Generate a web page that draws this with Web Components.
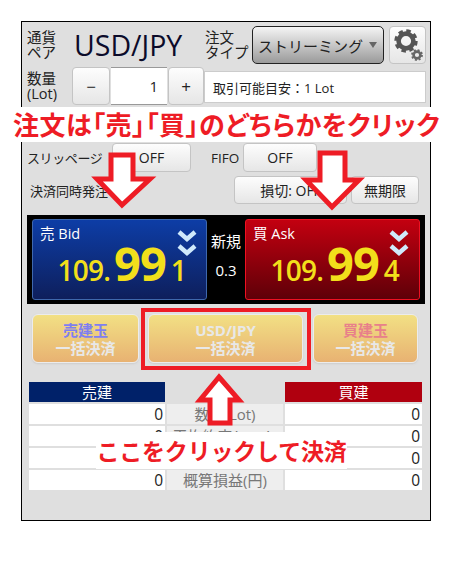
<!DOCTYPE html>
<html lang="ja">
<head>
<meta charset="utf-8">
<title>USD/JPY</title>
<style>
  html, body { margin: 0; background: #fff; }
  body { font-family: "Open Sans", "Noto Sans CJK JP", sans-serif; width: 474px; height: 562px; overflow: hidden; position: relative; }
</style>
</head>
<body>
<trade-panel></trade-panel>
<call-outs></call-outs>

<script>
const FONT = `"Open Sans", "Noto Sans CJK JP", sans-serif`;

class FxButton extends HTMLElement {
    constructor() {
        super();
        this.attachShadow({ mode: 'open' }).innerHTML = `
            <style>
                :host {
                    display: flex;
                    align-items: center;
                    justify-content: center;
                    box-sizing: border-box;
                    border: 1px solid #c4c4c4;
                    border-radius: 4px;
                    background: linear-gradient(#fdfdfd, #e6e6e6);
                    color: #222;
                    font-size: 14px;
                }
            </style>
            <slot></slot>
        `;
    }
}

class QuoteCard extends HTMLElement {
    constructor() {
        super();
        const sell = this.getAttribute('side') === 'sell';
        this.attachShadow({ mode: 'open' }).innerHTML = `
            <style>
                :host {
                    display: block;
                    position: relative;
                    box-sizing: border-box;
                    height: 81px;
                    border-radius: 3px;
                    border: 1px solid ${sell ? '#3f68ad' : '#ee1122'};
                    background: ${sell ? 'linear-gradient(#0d3da6, #0e1f5c)' : 'linear-gradient(#c30010, #5e0008)'};
                    color: #fff;
                }
                .name { position: absolute; left: 7px; top: 4px; font-size: 14.5px; line-height: 20px; }
                .price {
                    position: absolute;
                    right: 20px;
                    bottom: 1px;
                    display: flex;
                    align-items: baseline;
                    color: #f2df1b;
                    font-weight: 600;
                    font-size: 28px;
                    line-height: 56px;
                    letter-spacing: -0.8px;
                }
                .big { font-size: 47px; font-weight: 700; letter-spacing: -1px; margin: 0 5px 0 4px; }
                svg { position: absolute; right: ${sell ? '9px' : '10px'}; top: 10px; }
            </style>
            <div class="name"><slot name="name"></slot></div>
            <svg width="20" height="28" viewBox="0 0 20 28" fill="none" stroke="#cfe9fb" stroke-width="4.4">
                <polyline points="2,2 10,9 18,2"/>
                <polyline points="2,16 10,23 18,16"/>
            </svg>
            <div class="price"><span>${this.getAttribute('head')}</span><span class="big">${this.getAttribute('big')}</span><span>${this.getAttribute('tail')}</span></div>
        `;
    }
}

class CloseButton extends HTMLElement {
    constructor() {
        super();
        this.attachShadow({ mode: 'open' }).innerHTML = `
            <style>
                :host {
                    display: flex;
                    flex-direction: column;
                    align-items: center;
                    justify-content: center;
                    box-sizing: border-box;
                    height: 49px;
                    border-radius: 6px;
                    border: 1px solid #ececec;
                    background: linear-gradient(#f2e084, #e8b272);
                    box-shadow: 0 1px 2px #ccc;
                    color: #e8e8e8;
                    font-size: 15px;
                    font-weight: 700;
                    line-height: 18px;
                }
                .top { color: var(--top-color, #e8e8e8); }
            </style>
            <div class="top"><slot name="top"></slot></div>
            <div>一括決済</div>
        `;
    }
}

class PositionTable extends HTMLElement {
    constructor() {
        super();
        const labels = ['数量(Lot)', '平均約定レート', '評価損益(pips)', '概算損益(円)'];
        const rows = labels.map(l => `
            <div class="val">0</div><div class="mid">${l}</div><div class="val">0</div>
        `).join('');
        this.attachShadow({ mode: 'open' }).innerHTML = `
            <style>
                :host {
                    display: grid;
                    grid-template-columns: 136px 116px 137px;
                    grid-auto-rows: 20px;
                    column-gap: 2px;
                    row-gap: 2px;
                    font-size: 15px;
                }
                div { display: flex; align-items: center; line-height: 20px; }
                .head { justify-content: center; color: #fff; font-size: 15px; }
                .sell { background: #002169; }
                .buy { background: #b0000f; }
                .val { justify-content: flex-end; background: #fff; color: #222; padding-right: 2px; font-size: 15.5px; }
                .mid { justify-content: center; background: #eeeeee; color: #777; }
            </style>
            <div class="head sell">売建</div><div></div><div class="head buy">買建</div>
            ${rows}
        `;
    }
}

class TradePanel extends HTMLElement {
    constructor() {
        super();
        this.attachShadow({ mode: 'open' }).innerHTML = `
            <style>
                :host {
                    display: block;
                    box-sizing: border-box;
                    position: absolute;
                    left: 21px;
                    top: 21px;
                    width: 410px;
                    height: 500px;
                    border: 1px solid #000;
                    background: #dfdfdf;
                    padding: 4px 4px 0 5px;
                    font-family: ${FONT};
                    font-size: 14px;
                    color: #222;
                }
                .row { display: flex; align-items: stretch; }
                .lbl { font-size: 14.5px; line-height: 15px; display: flex; align-items: center; }
                .r1 { height: 38px; }
                .pair { width: 131px; font-size: 28.5px; color: #0b0b2a; display: flex; align-items: center; white-space: nowrap; }
                .select {
                    width: 132px;
                    border: 1px solid #222;
                    border-radius: 5px;
                    background: linear-gradient(#f4f4f4, #9a9a9a);
                    display: flex;
                    align-items: center;
                    box-sizing: border-box;
                    padding-left: 5px;
                    font-size: 15px;
                    white-space: nowrap;
                }
                .caret { width: 0; height: 0; border: 4px solid transparent; border-top: 6px solid #666; border-bottom: 0; margin-left: 6px; }
                fx-button.gear { width: 37px; margin-left: 5px; }
                .r2 { height: 38px; margin-top: 3px; }
                .num {
                    width: 56px;
                    box-sizing: border-box;
                    background: #fff;
                    border-top: 1px solid #999;
                    border-bottom: 1px solid #999;
                    text-align: right;
                    padding-right: 9px;
                    line-height: 36px;
                    margin: 0 1px 0 1px;
                    font-size: 15px;
                }
                .info {
                    flex: 1;
                    box-sizing: border-box;
                    margin: 4px 0 2px 0;
                    background: #fff;
                    border: 1px solid #ccc;
                    display: flex;
                    align-items: center;
                    padding-left: 8px;
                    font-size: 13px;
                }
                .step { font-size: 17px; }
                .r3 { height: 29px; margin-top: 38px; }
                .r4 { height: 28px; margin-top: 4px; }
                .plain { display: flex; align-items: center; font-size: 13.5px; white-space: nowrap; }
                .quotes {
                    display: grid;
                    grid-template-columns: 175px 1fr 175px;
                    box-sizing: border-box;
                    width: 398px;
                    height: 89px;
                    margin-top: 11px;
                    padding: 4px 5px;
                    background: #000;
                }
                .spread { display: flex; flex-direction: column; align-items: center; color: #fff; font-size: 15px; padding-top: 12px; gap: 9px; line-height: 20px; }
                .closers { display: flex; margin: 10px 0 0 5px; }
                position-table { margin: 19px 0 0 2px; }
            </style>
            <div class="row r1">
                <div class="lbl" style="width:47px">通貨<br>ペア</div>
                <div class="pair">USD/JPY</div>
                <div class="lbl" style="width:47px">注文<br>タイプ</div>
                <div class="select">ストリーミング<span class="caret"></span></div>
                <fx-button class="gear">
                    <svg width="32" height="34" viewBox="0 0 32 34" fill="none" stroke="#555">
                        <circle cx="14" cy="13" r="7.4" stroke-width="4.6"/>
                        <circle cx="14" cy="13" r="10" stroke-width="3.4" stroke-dasharray="4.4 3.45"/>
                        <circle cx="25" cy="27" r="3.4" stroke-width="2.6" stroke="#666"/>
                        <circle cx="25" cy="27" r="5" stroke-width="1.8" stroke-dasharray="2 1.93" stroke="#666"/>
                    </svg>
                </fx-button>
            </div>
            <div class="row r2">
                <div class="lbl" style="width:45px">数量<br>(Lot)</div>
                <fx-button class="step" style="width:38px">−</fx-button>
                <div class="num">1</div>
                <fx-button class="step" style="width:36px">+</fx-button>
                <div class="info">取引可能目安：1 Lot</div>
            </div>
            <div class="row r3">
                <div class="plain" style="width:85px;font-size:13px;letter-spacing:-0.4px">スリッページ</div>
                <fx-button style="width:79px">OFF</fx-button>
                <div class="plain" style="width:32px;margin-left:20px">FIFO</div>
                <fx-button style="width:74px">OFF</fx-button>
            </div>
            <div class="row r4">
                <div class="plain" style="width:207px;padding-left:3px;box-sizing:border-box;font-size:13px">決済同時発注</div>
                <fx-button style="width:113px">損切: OFF</fx-button>
                <fx-button style="width:68px;margin-left:4px">無期限</fx-button>
            </div>
            <div class="quotes">
                <quote-card side="sell" head="109." big="99" tail="1"><span slot="name">売 Bid</span></quote-card>
                <div class="spread"><span>新規</span><span>0.3</span></div>
                <quote-card side="buy" head="109." big="99" tail="4"><span slot="name">買 Ask</span></quote-card>
            </div>
            <div class="closers">
                <close-button style="width:107px;--top-color:#7f7ff0"><span slot="top">売建玉</span></close-button>
                <close-button style="width:155px;margin-left:9px"><span slot="top">USD/JPY</span></close-button>
                <close-button style="width:105px;margin-left:10px;--top-color:#e8808a"><span slot="top">買建玉</span></close-button>
            </div>
            <position-table></position-table>
        `;
    }
}

// annotations drawn on top of the screenshot
class CallOuts extends HTMLElement {
    constructor() {
        super();
        this.attachShadow({ mode: 'open' }).innerHTML = `
            <style>
                :host { display: block; position: absolute; left: 0; top: 0; width: 474px; height: 562px; font-family: ${FONT}; }
                .band {
                    position: absolute;
                    background: #fff;
                    color: #ee1c25;
                    font-family: "Noto Sans CJK JP", sans-serif;
                    font-weight: 700;
                    white-space: nowrap;
                    text-align: center;
                }
                .one { left: 0; top: 107px; width: 474px; height: 35px; font-size: 26px; line-height: 34px; padding-right: 21px; box-sizing: border-box; font-feature-settings: "palt"; letter-spacing: 0.5px; }
                .two { left: 96px; top: 432px; width: 251px; height: 37px; font-size: 23px; line-height: 37px; letter-spacing: -0.2px; }
                .box { position: absolute; left: 141px; top: 308px; width: 170px; height: 62px; box-sizing: border-box; border: 4px solid #ee1c25; }
                svg { position: absolute; left: 0; top: 0; }
            </style>
            <div class="band one">注文は「売」「買」のどちらかをクリック</div>
            <div class="band two">ここをクリックして決済</div>
            <div class="box"></div>
            <svg width="474" height="562" fill="#fff" stroke="#ee1c25" stroke-width="5" stroke-linejoin="miter">
                <polygon points="111,155 133,155 133,179 150,179 122,205 97,179 111,179"/>
                <polygon points="320,153 345,153 345,180 359,180 332,207 306,180 320,180"/>
                <polygon points="219,377 239,400 230,400 230,423 210,423 210,400 200,400"/>
            </svg>
        `;
    }
}

customElements.define('fx-button', FxButton);
customElements.define('quote-card', QuoteCard);
customElements.define('close-button', CloseButton);
customElements.define('position-table', PositionTable);
customElements.define('trade-panel', TradePanel);
customElements.define('call-outs', CallOuts);
</script>
</body>
</html>
